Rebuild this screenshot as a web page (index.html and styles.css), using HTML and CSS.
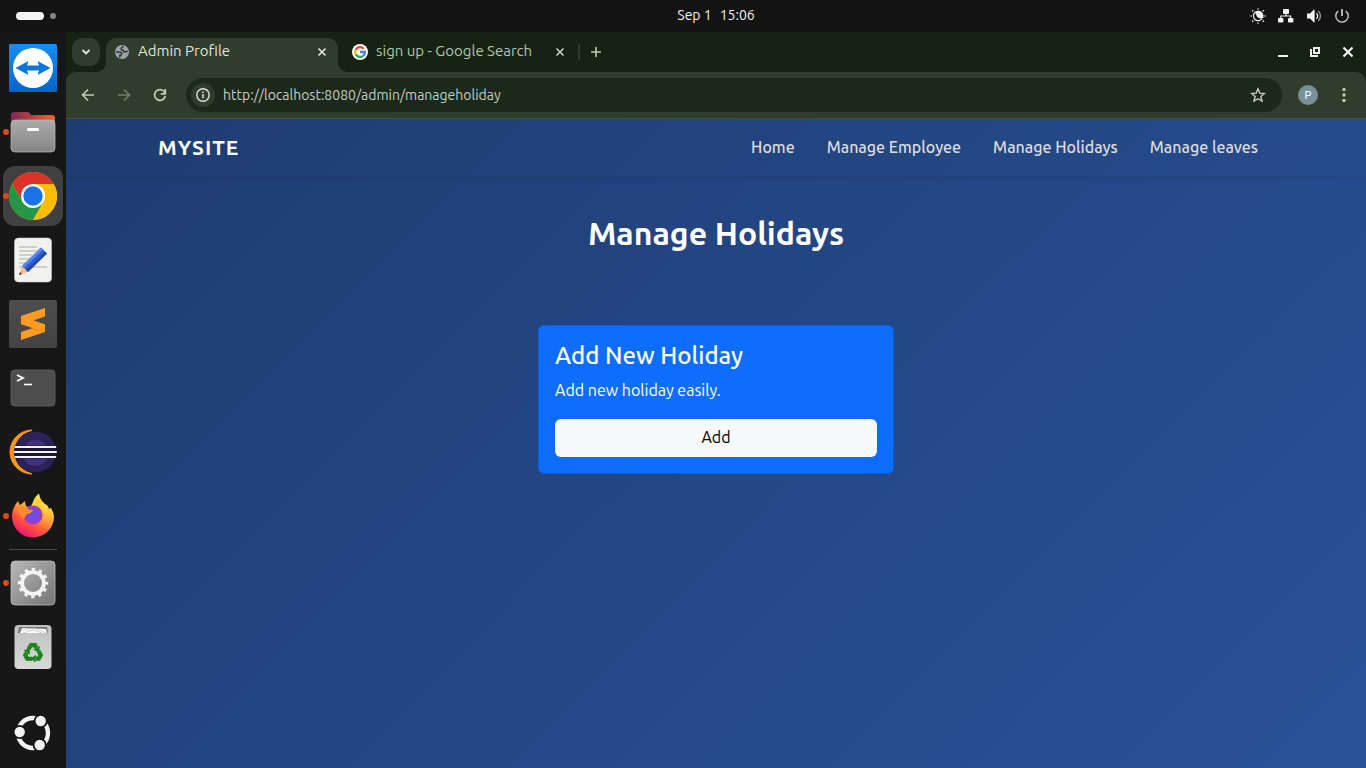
FILE: index.html
```html
<!DOCTYPE html>
<html lang="en">
<head>
<meta charset="utf-8">
<meta name="viewport" content="width=device-width, initial-scale=1">
<title>Admin Profile</title>
<link rel="stylesheet" href="styles.css">
</head>
<body>
<header class="panel">
  <button class="workspaces" aria-label="Activities"><span class="ws-current"></span><span class="ws-other"></span></button>
  <button class="clock"><span>Sep 1</span><time>15:06</time></button>
  <button class="tray" aria-label="System menu">
    <svg width="16" height="16" viewBox="0 0 16 16"><circle cx="8" cy="8" r="4.6" fill="none" stroke="#f2f2f2" stroke-width="1.2"/><path d="M6.500 3.800a4.600 4.600 0 0 0 6 5.500A4.600 4.600 0 0 0 6.500 3.800z" fill="#f2f2f2" stroke="#f2f2f2" stroke-width="1.600"/><path d="M8 0v1.8M8 14.2V16M0 8h1.8M14.2 8H16" stroke="#999" stroke-width="1.5"/><path d="M2.2 2.2l1.2 1.2M12.6 12.6l1.2 1.2M2.2 13.8l1.2-1.2M12.6 3.4l1.2-1.2" stroke="#ddd" stroke-width="1.4"/></svg>
    <svg width="16" height="16" viewBox="0 0 16 16"><g fill="#f2f2f2"><rect x="5" y="1" width="6" height="5" rx="1"/><rect x="0" y="10" width="5.4" height="4.6" rx="1"/><rect x="10" y="10" width="5.4" height="4.6" rx="1"/></g><path d="M8 6v2M2.8 10V8h9.8v2" fill="none" stroke="#f2f2f2" stroke-width="1.2"/></svg>
    <svg width="16" height="16" viewBox="0 0 16 16"><path d="M1 5.5h3L8 1.5h.6v13H8l-4-4H1z" fill="#f2f2f2"/><path d="M10.5 5.3a3.6 3.6 0 0 1 0 5.4" fill="none" stroke="#f2f2f2" stroke-width="1.3"/><path d="M12.3 3a7 7 0 0 1 0 10" fill="none" stroke="#999" stroke-width="1.3"/></svg>
    <svg width="16" height="16" viewBox="0 0 16 16"><path d="M4.2 3a6.2 6.2 0 1 0 7.6 0" fill="none" stroke="#d5d5d5" stroke-width="1.3"/><path d="M8 1v7" stroke="#f2f2f2" stroke-width="1.4"/></svg>
  </button>
</header>
<div class="desktop">
  <nav class="dock" aria-label="Dock">
    <button class="app" aria-label="TeamViewer">
      <svg width="48" height="48" viewBox="0 0 48 48"><defs><linearGradient id="tv" x2="0" y2="1"><stop stop-color="#168ff0"/><stop offset="1" stop-color="#0862cb"/></linearGradient></defs><rect width="48" height="48" rx="1.5" fill="url(#tv)"/><circle cx="24" cy="24" r="20" fill="#fff"/><path d="M6.500 24l13-7-1.500 4.600h12L28.500 17l13 7-13 7 1.500-4.600H18l1.500 4.600z" fill="#0b75dc"/></svg>
    </button>
    <button class="app running" aria-label="Files">
      <svg width="48" height="48" viewBox="0 0 48 48"><defs><linearGradient id="fo" x2="1" y2="0"><stop stop-color="#7d2957"/><stop offset="1" stop-color="#f0602a"/></linearGradient><linearGradient id="gr" x2="0" y2="1"><stop stop-color="#aaa"/><stop offset="1" stop-color="#858585"/></linearGradient></defs><path d="M2 18V7q0-3 3-3h13q2 0 3 1.500l1 1.500h21q3 0 3 3v8z" fill="url(#fo)"/><rect x="2" y="12" width="44" height="32" rx="4" fill="url(#gr)" stroke="#bbb" stroke-width=".7"/><rect x="18" y="20" width="12" height="3" rx="1" fill="#fff"/></svg>
    </button>
    <button class="app running focused" aria-label="Google Chrome">
      <svg width="48" height="48" viewBox="0 0 48 48"><circle cx="24" cy="24" r="24" fill="#fbbd08"/><path d="M24 12h20.800A24 24 0 0 0 3.200 12L13.600 30z" fill="#dd3227"/><path d="M3.200 12A24 24 0 0 0 24 48l10.400-18-10.400 6-10.400-6z" fill="#249747"/><path d="M24 12h20.800A24 24 0 0 1 24 48l10.400-18z" fill="#fbbd08"/><circle cx="24" cy="24" r="12" fill="#fff"/><circle cx="24" cy="24" r="9.700" fill="#1a73e8"/></svg>
    </button>
    <button class="app" aria-label="Text Editor">
      <svg width="48" height="48" viewBox="0 0 48 48"><rect x="5.500" y="2" width="37" height="44" rx="4" fill="#f1f1f0" stroke="#ccc" stroke-width=".6"/><path d="M10 11h18M10 15h18M10 19h13M10 23h14M10 27h10M10 31h28" stroke="#c5c3b7" stroke-width="1.600"/><path d="M10 39l3-9 6 6z" fill="#f7bd83"/><path d="M10 39l1-3 2 2z" fill="#333"/><path d="M13 30l19-18.500 6 6L19 36z" fill="#2b61cf"/><path d="M13 30l19-18.500 2 2L15 32z" fill="#5688ed"/><path d="M17 34l19-18.500 2 2L19 36z" fill="#2347ad"/></svg>
    </button>
    <button class="app" aria-label="Sublime Text">
      <svg width="48" height="48" viewBox="0 0 48 48"><defs><linearGradient id="sb" x2="0" y2="1"><stop stop-color="#4d4d4d"/><stop offset="1" stop-color="#434343"/></linearGradient></defs><rect width="48" height="48" rx="2.500" fill="url(#sb)"/><path d="M12 16L36 8v8.500L24 20.500l12 4V32l-24 8v-8l12-4-12-4z" fill="#ff9b22"/><path d="M21 29.200l5-1.700 10-3V32z" fill="#f08c14"/><path d="M12 16l24 8.500V32l-24-8z" fill="#ff9b22"/></svg>
    </button>
    <button class="app" aria-label="Terminal">
      <svg width="48" height="48" viewBox="0 0 48 48"><rect x="2" y="6" width="44" height="36" rx="4" fill="#4d4d4d" stroke="#666" stroke-width=".8"/><path d="M8 11l6 3-6 3" fill="none" stroke="#fff" stroke-width="1.800"/><path d="M15 20.500h8" stroke="#fff" stroke-width="1.600"/></svg>
    </button>
    <button class="app" aria-label="Eclipse">
      <svg width="48" height="48" viewBox="0 0 48 48"><defs><clipPath id="ec"><circle cx="26.500" cy="24" r="21.300"/></clipPath></defs><path d="M23 2a22 22 0 0 0 0 44A26 26 0 0 1 23 2z" fill="#f7941e" stroke="#f7941e"/><g clip-path="url(#ec)"><circle cx="26.500" cy="24" r="21" fill="#2c2255" stroke="#15122a"/><circle cx="26.500" cy="25" r="13" fill="#413181"/><path d="M5 17.500h43v13H5z" fill="#1b1538"/><path d="M5 19h43M5 24h43M5 29h43" stroke="#f4f3fb" stroke-width="2.200"/></g></svg>
    </button>
    <button class="app running" aria-label="Firefox">
      <svg width="48" height="48" viewBox="0 0 48 48"><defs><linearGradient id="ff" x1=".8" y1=".1" x2=".3" y2="1"><stop stop-color="#fff44f"/><stop offset=".4" stop-color="#ffa436"/><stop offset=".7" stop-color="#ff4f3f"/><stop offset="1" stop-color="#ed127d"/></linearGradient><radialGradient id="fg"><stop stop-color="#5b55e7"/><stop offset="1" stop-color="#a038cf"/></radialGradient></defs><path d="M3 24q0-8 6-15 1 3 2 4 3-2 5-4 0 4 2 6 3-1 5-1 1-8 7-12.500 1 7 6 10.500 3 1 4 5l2-1q3 5 3 9A21 21 0 0 1 3 24z" fill="url(#ff)"/><circle cx="24" cy="23" r="9.500" fill="url(#fg)"/><path d="M9 16q4-3 8-1 2 3 7 3-1 3-6 4-2 2-3 5-5-3-6-11z" fill="#ff8c2b"/><path d="M22 14q6-3 11 2 5 5 2 12 6-9-1-18l-5-4-6 6z" fill="#ffd53b"/></svg>
    </button>
    <hr class="dock-rule">
    <button class="app running" aria-label="Settings">
      <svg width="48" height="48" viewBox="0 0 48 48"><defs><linearGradient id="se" x2="1" y2="1"><stop stop-color="#b8b8b8"/><stop offset="1" stop-color="#747474"/></linearGradient></defs><rect x="2" y="2" width="44" height="44" rx="4" fill="url(#se)" stroke="#bbb" stroke-width=".8"/><circle cx="24" cy="24" r="13.500" fill="none" stroke="#f4f4f2" stroke-width="3.400" stroke-dasharray="3.200 3.868" stroke-dashoffset="1.600"/><circle cx="24" cy="24" r="10.900" fill="none" stroke="#f4f4f2" stroke-width="3.800"/></svg>
    </button>
    <button class="app" aria-label="Trash">
      <svg width="48" height="48" viewBox="0 0 48 48"><defs><linearGradient id="tr" x2="0" y2="1"><stop stop-color="#c0c0c0"/><stop offset="1" stop-color="#d8d8d8"/></linearGradient><g id="arm"><path d="M19.300 26.500l2.700-4.300h4l1.400 2.400" fill="none" stroke="#1c851d" stroke-width="4.200"/><path d="M31 23l-1 6.500-6-3z" fill="#1c851d"/></g></defs><rect x="5.500" y="2" width="37" height="44" rx="4" fill="url(#tr)"/><path d="M9 10l1-6h28l1 6z" fill="#777"/><path d="M11 10l2-5 24 1 1 4z" fill="#fff"/><path d="M12 7l14-2 11 5M14 10l10-3 9 3" fill="none" stroke="#aaa" stroke-width=".6"/><use href="#arm"/><use href="#arm" transform="rotate(120 24 30)"/><use href="#arm" transform="rotate(240 24 30)"/></svg>
    </button>
    <button class="app app-grid" aria-label="Show Apps">
      <svg width="48" height="48" viewBox="0 0 48 48"><circle cx="24" cy="24" r="15" fill="none" stroke="#f2f2f2" stroke-width="4.400"/><g fill="#f2f2f2" stroke="#151515" stroke-width="1.800"><circle cx="10.700" cy="23" r="6.100"/><circle cx="31.700" cy="12" r="6.100"/><circle cx="30.700" cy="36" r="6.100"/></g></svg>
    </button>
  </nav>
  <div class="browser">
    <div class="tabstrip">
      <button class="tab-search" aria-label="Search tabs"><svg width="10" height="10" viewBox="0 0 10 10"><path d="M1.500 3L5 6.500 8.500 3" fill="none" stroke="#dfe8d8" stroke-width="1.800"/></svg></button>
      <div class="tab active">
        <svg width="16" height="16" viewBox="0 0 16 16"><circle cx="8" cy="8" r="7" fill="#9da3ac"/><path d="M9.500 2.200L7.300 4v1.700l2.200.8v1.300h3.200l.8-1M2 8h4.200l1.600 1.500-.8 1.700H5.800v2.500" fill="none" stroke="#303c2c" stroke-width="1.500"/></svg>
        <button class="tab-label">Admin Profile</button>
        <button class="tab-close" aria-label="Close Admin Profile"><svg width="10" height="10" viewBox="0 0 10 10"><path d="M1.500 1.500l7 7M8.500 1.500l-7 7" stroke="#e2eadc" stroke-width="1.600"/></svg></button>
      </div>
      <div class="tab">
        <svg width="16" height="16" viewBox="0 0 16 16"><circle cx="8" cy="8" r="8" fill="#fff"/><g fill="none" stroke-width="2.300"><path d="M11.700 4.700A5 5 0 0 0 3.700 5.600" stroke="#ea4335"/><path d="M3.700 5.500a5 5 0 0 0 0 5" stroke="#fbbc05"/><path d="M3.700 10.400a5 5 0 0 0 7.500 1.400" stroke="#34a853"/><path d="M8 8h4.900q0 2.400-1.700 3.900" stroke="#4285f4"/></g></svg>
        <button class="tab-label">sign up - Google Search</button>
        <button class="tab-close" aria-label="Close Google Search"><svg width="10" height="10" viewBox="0 0 10 10"><path d="M1.500 1.500l7 7M8.500 1.500l-7 7" stroke="#c6d0bf" stroke-width="1.600"/></svg></button>
      </div>
      <span class="tab-divider"></span>
      <button class="new-tab" aria-label="New tab"><svg width="12" height="12" viewBox="0 0 12 12"><path d="M6 1v10M1 6h10" stroke="#b9ccb1" stroke-width="1.600"/></svg></button>
      <div class="window-controls">
        <button aria-label="Minimize"><svg width="12" height="12" viewBox="0 0 12 12"><path d="M0 10h10" stroke="#eef2ec" stroke-width="2"/></svg></button>
        <button aria-label="Restore"><svg width="12" height="12" viewBox="0 0 12 12"><path d="M4 2h5v5H4z" fill="none" stroke="#eef2ec" stroke-width="2"/><path d="M1 3v7h7" fill="none" stroke="#eef2ec" stroke-width="2"/></svg></button>
        <button aria-label="Close"><svg width="12" height="12" viewBox="0 0 12 12"><path d="M1.500 1.500l9 9M10.500 1.500l-9 9" stroke="#eef2ec" stroke-width="2.200"/></svg></button>
      </div>
    </div>
    <div class="toolbar">
      <button class="tool" aria-label="Back"><svg width="16" height="16" viewBox="0 0 16 16"><path d="M14 8H3M8 2.500L2.500 8 8 13.500" fill="none" stroke="#bdd0b5" stroke-width="1.600"/></svg></button>
      <button class="tool" aria-label="Forward"><svg width="16" height="16" viewBox="0 0 16 16"><path d="M2 8h11M8 2.500L13.500 8 8 13.500" fill="none" stroke="#71806c" stroke-width="1.600"/></svg></button>
      <button class="tool" aria-label="Reload"><svg width="16" height="16" viewBox="0 0 16 16"><path d="M13.300 9A5.400 5.400 0 1 1 12 4.300L13 6" fill="none" stroke="#bdd0b5" stroke-width="1.700"/><path d="M13.300 2v4.800H8.800" fill="none" stroke="#bdd0b5" stroke-width="1.700"/></svg></button>
      <div class="omnibox">
        <button class="site-info" aria-label="View site information"><svg width="16" height="16" viewBox="0 0 16 16"><circle cx="8" cy="8" r="6.200" fill="none" stroke="#dde5d7" stroke-width="1.400"/><path d="M8 7v4.200M8 4.500v1.500" stroke="#dde5d7" stroke-width="1.500"/></svg></button>
        <input class="address" type="text" aria-label="Address" value="http://localhost:8080/admin/manageholiday">
        <button class="bookmark" aria-label="Bookmark this tab"><svg width="16" height="16" viewBox="0 0 16 16"><path d="M8 1.800l1.800 4.300 4.600.4-3.500 3 1.100 4.600L8 11.700l-4 2.400 1.100-4.600-3.500-3 4.600-.4z" fill="none" stroke="#c6cec0" stroke-width="1.400"/></svg></button>
      </div>
      <button class="avatar" aria-label="Profile">P</button>
      <button class="menu" aria-label="Menu"><svg width="4" height="16" viewBox="0 0 4 16"><g fill="#bdd0b5"><circle cx="2" cy="2.500" r="1.700"/><circle cx="2" cy="8" r="1.700"/><circle cx="2" cy="13.500" r="1.700"/></g></svg></button>
    </div>
    <div class="page">
      <header class="site-header">
        <div class="container">
          <a class="brand" href="#">MYSITE</a>
          <nav class="site-nav">
            <a href="#">Home</a>
            <a href="#">Manage Employee</a>
            <a href="#">Manage Holidays</a>
            <a href="#">Manage leaves</a>
          </nav>
        </div>
      </header>
      <main class="content">
        <h1>Manage Holidays</h1>
        <section class="card">
          <h2>Add New Holiday</h2>
          <p>Add new holiday easily.</p>
          <button class="btn">Add</button>
        </section>
      </main>
    </div>
  </div>
</div>
</body>
</html>
```

FILE: styles.css
```css
* {
  box-sizing: border-box;
}

body {
  margin: 0;
  min-height: 100vh;
  display: flex;
  flex-direction: column;
  background: #151515;
  font-family: "Ubuntu", "Noto Sans", sans-serif;
  font-size: 16px;
}

button {
  padding: 0;
  border: 0;
  background: none;
  color: inherit;
  font: inherit;
}

svg {
  display: block;
  flex: none;
}

/* Top panel */
.panel {
  height: 32px;
  display: grid;
  grid-template-columns: 1fr auto 1fr;
  align-items: center;
  padding: 0 16px;
  background: #131313;
  color: #f2f2f2;
}

.workspaces {
  justify-self: start;
  display: flex;
  align-items: center;
  gap: 6px;
}

.ws-current {
  width: 28px;
  height: 8px;
  border-radius: 4px;
  background: #f2f2f2;
}

.ws-other {
  width: 6px;
  height: 6px;
  border-radius: 50%;
  background: #858585;
}

/* The clock is centred on the area to the right of the dock. */
.clock {
  display: flex;
  gap: 8px;
  padding: 0 0 2px 66px;
  font-size: 14px;
  line-height: 20px;
}

.tray {
  justify-self: end;
  display: flex;
  gap: 12px;
}

.desktop {
  flex: 1;
  display: flex;
}

/* Dock */
.dock {
  width: 66px;
  display: flex;
  flex-direction: column;
  align-items: center;
  gap: 4px;
  padding: 6px 0 5px;
  background: #171717;
}

.app {
  position: relative;
  width: 60px;
  height: 60px;
  flex: none;
  display: grid;
  place-items: center;
  border-radius: 12px;
}

.focused {
  background: #404040;
}

.running::before {
  content: "";
  position: absolute;
  left: 0;
  top: 27px;
  width: 6px;
  height: 6px;
  border-radius: 50%;
  background: #dc4a16;
}

.dock-rule {
  width: 48px;
  height: 1px;
  margin: -1px 0;
  border: 0;
  background: #484848;
}

.app-grid {
  margin-top: auto;
}

/* Browser */
.browser {
  flex: 1;
  min-width: 0;
  display: flex;
  flex-direction: column;
  background: #162313;
}

.tabstrip {
  height: 40px;
  display: flex;
  align-items: center;
  padding: 0 12px 0 6px;
}

.tab-search {
  width: 28px;
  height: 28px;
  display: grid;
  place-items: center;
  margin-right: 6px;
  border-radius: 10px;
  background: #303c2c;
}

.tab {
  width: 232px;
  height: 28px;
  display: flex;
  align-items: center;
  gap: 8px;
  padding: 0 8px;
  margin-left: 6px;
  color: #b5c5ae;
  font-size: 15px;
}

.active {
  position: relative;
  align-self: flex-end;
  height: 34px;
  margin-left: 0;
  padding-bottom: 6px;
  border-radius: 10px 10px 0 0;
  background: #303c2c;
  color: #dfe7d9;
}

.active::before,
.active::after {
  content: "";
  position: absolute;
  bottom: 0;
  width: 10px;
  height: 10px;
}

.active::before {
  right: 100%;
  background: radial-gradient(circle at 0 0, transparent 10px, #303c2c 10px);
}

.active::after {
  left: 100%;
  background: radial-gradient(circle at 100% 0, transparent 10px, #303c2c 10px);
}

.tab-label {
  flex: 1;
  padding-bottom: 2px;
  overflow: hidden;
  line-height: 18px;
  text-align: left;
  white-space: nowrap;
}

.tab-close {
  width: 16px;
  height: 16px;
  display: grid;
  place-items: center;
}

.tab-divider {
  width: 2px;
  height: 16px;
  margin-left: 2px;
  background: #303c2c;
}

.new-tab {
  width: 32px;
  height: 28px;
  display: grid;
  place-items: center;
}

.window-controls {
  margin-left: auto;
  display: flex;
  gap: 20px;
}

.toolbar {
  height: 47px;
  display: flex;
  align-items: center;
  padding: 0 20px 0 4px;
  border-bottom: 1px solid #454f3c;
  border-radius: 10px 10px 0 0;
  background: #303c2c;
}

.tool {
  width: 36px;
  height: 34px;
  display: grid;
  place-items: center;
}

.omnibox {
  flex: 1;
  height: 34px;
  display: flex;
  align-items: center;
  gap: 8px;
  margin: 0 16px 0 8px;
  padding: 0 16px 0 5px;
  border-radius: 17px;
  background: #1c2819;
}

.site-info {
  width: 24px;
  height: 24px;
  display: grid;
  place-items: center;
  border-radius: 50%;
  background: #303c2c;
}

.address {
  flex: 1;
  min-width: 0;
  padding: 0;
  border: 0;
  background: none;
  color: #c5cfbf;
  font: inherit;
  font-size: 14px;
}

.avatar {
  width: 20px;
  height: 20px;
  margin-right: 24px;
  border-radius: 50%;
  background: #78909c;
  color: #fff;
  font-family: Roboto, sans-serif;
  font-size: 11px;
}

/* Page */
.page {
  flex: 1;
  background: linear-gradient(135deg, #1e3c72, #2a5298);
  color: #fff;
}

.site-header {
  box-shadow: 0 2px 4px rgba(0, 0, 0, 0.1);
}

.container {
  max-width: 1140px;
  display: flex;
  align-items: center;
  justify-content: space-between;
  margin: 0 auto;
  padding: 8px 12px 9px;
}

.brand {
  color: #fff;
  font-size: 21px;
  font-weight: 700;
  line-height: 30px;
  letter-spacing: 1px;
  text-decoration: none;
}

.site-nav {
  display: flex;
}

.site-nav a {
  padding: 8px 16px;
  color: #dddddd;
  font-weight: 500;
  line-height: 24px;
  text-decoration: none;
}

.content {
  display: flex;
  flex-direction: column;
  align-items: center;
  padding: 39px 12px;
}

h1 {
  margin: 0 0 74px;
  font-size: 32px;
  font-weight: 600;
  line-height: 36px;
}

.card {
  width: 100%;
  max-width: 356px;
  padding: 16px;
  border: 1px solid #0b5fdd;
  border-radius: 6px;
  background: #0d6efd;
}

.card h2 {
  margin: 0 0 8px;
  font-size: 24px;
  font-weight: 500;
  line-height: 28px;
}

.card p {
  margin: 0 0 17px;
  line-height: 24px;
}

.btn {
  width: 100%;
  height: 38px;
  padding-bottom: 2px;
  border-radius: 6px;
  background: #f8f9fa;
  color: #000;
}
```
